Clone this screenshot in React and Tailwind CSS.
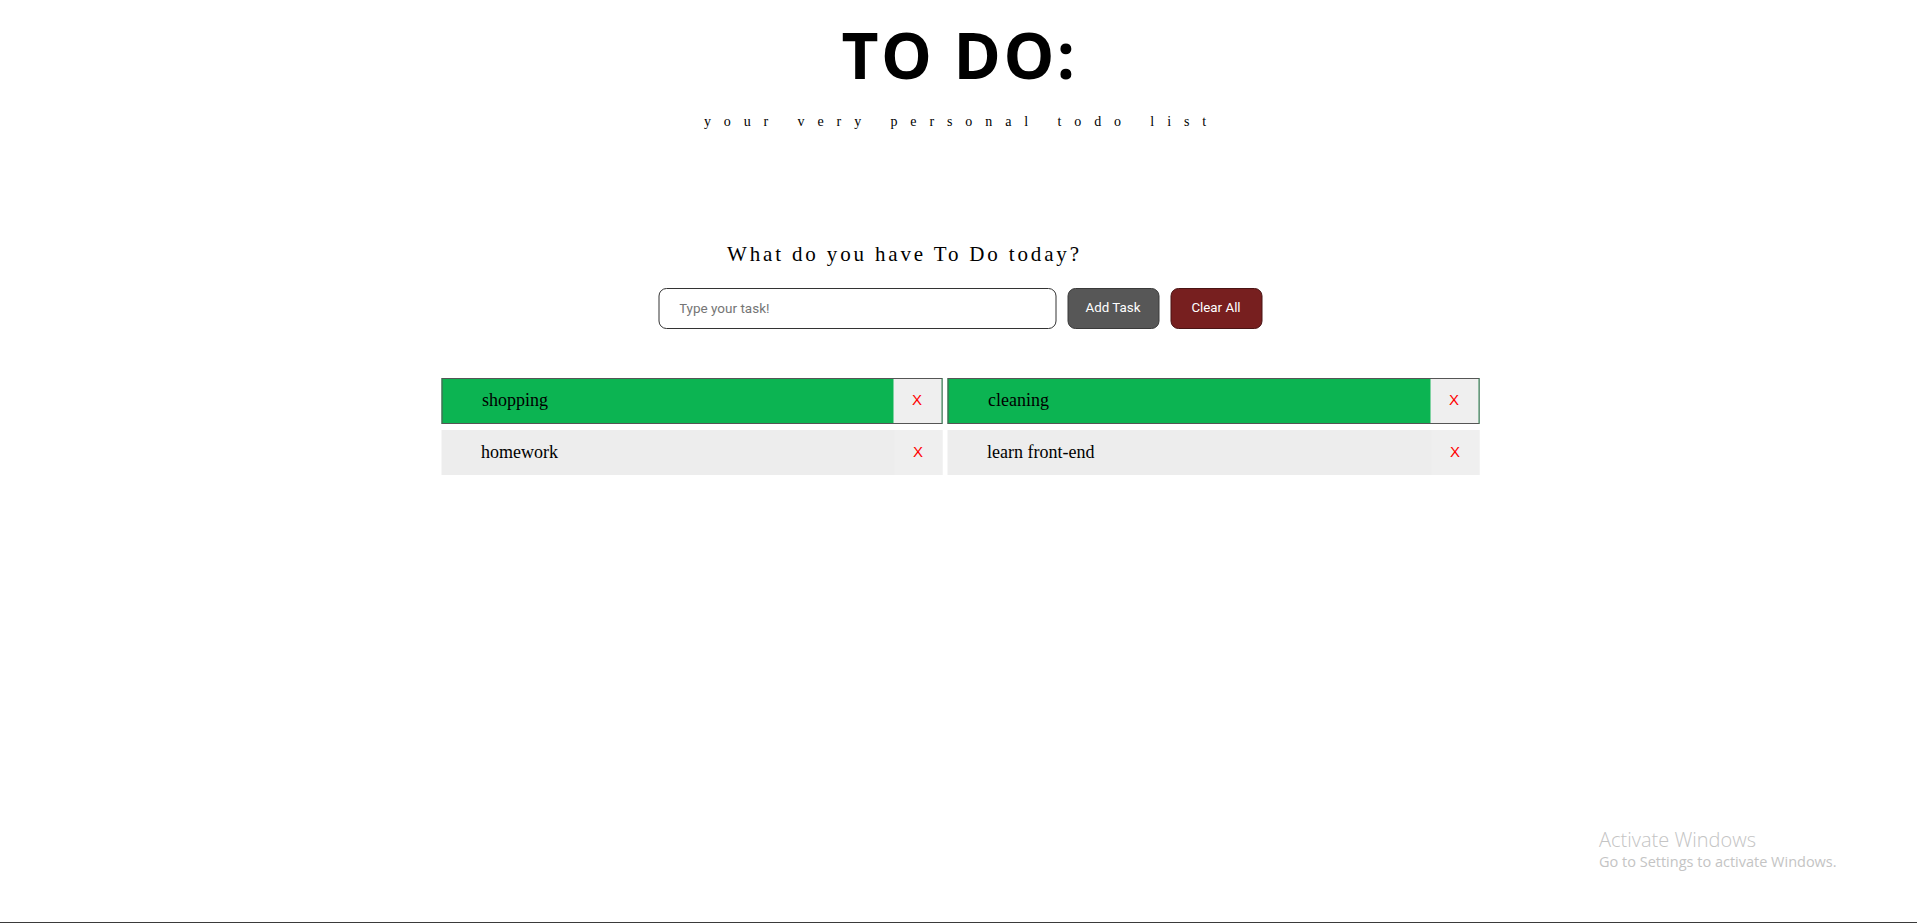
import React, { useState } from 'react';

const initialTasks = [
  { id: 1, text: 'shopping', done: true },
  { id: 2, text: 'cleaning', done: true },
  { id: 3, text: 'homework', done: false },
  { id: 4, text: 'learn front-end', done: false },
];

const TaskItem = ({ task, onToggle, onRemove }) => (
  <div
    className={`flex items-stretch ${task.done ? 'h-[46px] border border-[#555555] bg-[#0cb452]' : 'h-[45px] bg-[#ededed]'}`}
  >
    <div
      onClick={onToggle}
      className="flex-1 flex items-center pl-[40px] text-[18px] text-black cursor-pointer"
      style={{ fontFamily: '"Liberation Serif", serif' }}
    >
      {task.text}
    </div>
    <button
      onClick={onRemove}
      className="w-[48px] flex items-center justify-center bg-[#efefef] text-[15px] text-[#ff0000]"
      style={{ fontFamily: '"Liberation Sans", Arial, sans-serif' }}
    >
      X
    </button>
  </div>
);

export default function App() {
  const [tasks, setTasks] = useState(initialTasks);
  const [input, setInput] = useState('');

  const addTask = () => {
    if (!input.trim()) return;
    setTasks([...tasks, { id: Date.now(), text: input.trim(), done: false }]);
    setInput('');
  };

  return (
    <div className="relative h-[923px] bg-white flex flex-col overflow-hidden">
      {/* header */}
      <div className="flex flex-col items-center">
        <h1
          className="mt-[7px] pl-[2px] text-[64px] font-bold leading-normal tracking-[2.5px] text-black"
          style={{ fontFamily: '"Open Sans", sans-serif' }}
        >
          TO DO:
        </h1>
        <p
          className="mt-[8px] pl-[6px] text-[14px] leading-normal tracking-[12.9px] text-black"
          style={{ fontFamily: '"Liberation Serif", serif' }}
        >
          your very personal todo list
        </p>
      </div>

      <div className="w-[1038px] mx-auto translate-x-[1.5px]">
        <h2
          className="mt-[107px] ml-[286px] text-[21px] leading-normal tracking-[2.85px] text-black"
          style={{ fontFamily: '"Liberation Serif", serif' }}
        >
          What do you have To Do today?
        </h2>

        <div className="mt-[17px] flex justify-center gap-[11px]" style={{ fontFamily: 'Roboto, sans-serif' }}>
          <input
            value={input}
            onChange={(e) => setInput(e.target.value)}
            placeholder="Type your task!"
            className="w-[398px] h-[41px] rounded-[8px] border border-[#333333] pl-[20px] text-[13.5px] outline-none placeholder:text-[#757575]"
          />
          <button
            onClick={addTask}
            className="w-[92px] h-[41px] rounded-[8px] border border-[#3a3a3a] bg-[#575757] text-[13.33px] text-white"
          >
            Add Task
          </button>
          <button
            onClick={() => setTasks([])}
            className="w-[92px] h-[41px] rounded-[8px] border border-[#4a1414] bg-[#771f1f] text-[13.33px] text-white"
          >
            Clear All
          </button>
        </div>

        <div className="mt-[49px] grid grid-cols-[501px_532px] gap-x-[5px] gap-y-[6px]">
          {tasks.map((t) => (
            <TaskItem
              key={t.id}
              task={t}
              onToggle={() => setTasks(tasks.map((x) => (x.id === t.id ? { ...x, done: !x.done } : x)))}
              onRemove={() => setTasks(tasks.filter((x) => x.id !== t.id))}
            />
          ))}
        </div>
      </div>

      <div className="flex-1" />
      <div className="h-[1px] bg-[#3a3a3a]" />

      {/* windows watermark */}
      <div
        className="absolute left-[1599px] top-[827px] text-[#c4c4c4] leading-tight"
        style={{ fontFamily: '"Open Sans", sans-serif' }}
      >
        <div className="text-[20px] font-light">Activate Windows</div>
        <div className="text-[14.5px] mt-[1px]">Go to Settings to activate Windows.</div>
      </div>
    </div>
  );
}
